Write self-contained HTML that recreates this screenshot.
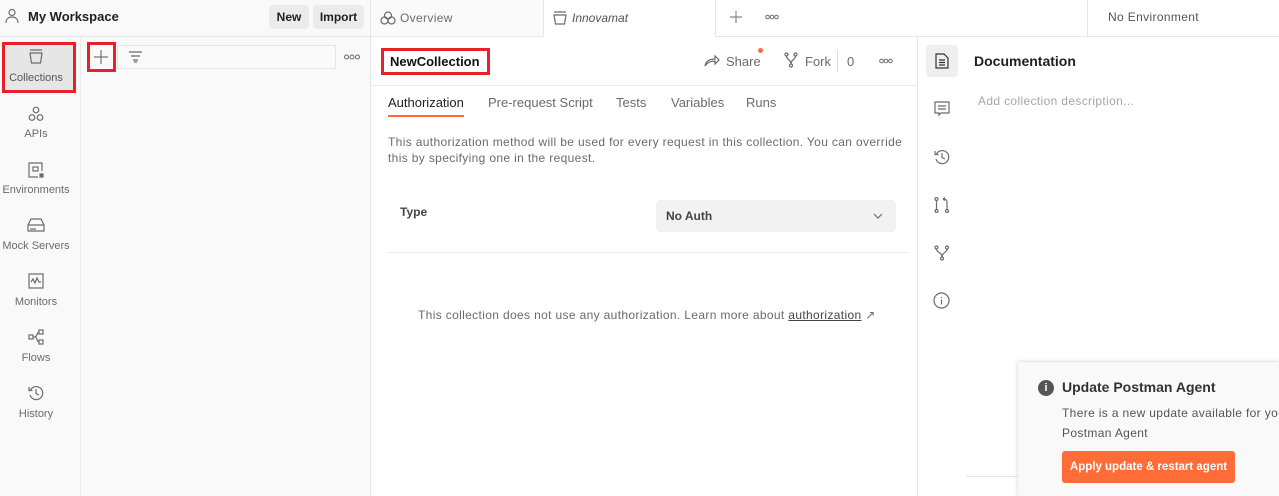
<!DOCTYPE html>
<html><head><style>
*{margin:0;padding:0;box-sizing:border-box}
body{width:1279px;height:496px;overflow:hidden;font-family:"Liberation Sans",sans-serif;font-size:12px;color:#212121;background:#fff;position:relative}
.a{position:absolute}
svg{position:absolute;fill:none;stroke:#6b6b6b;stroke-width:1.2}
.nav{position:absolute;left:0;width:72px;text-align:center;font-size:11px;color:#6b6b6b}
.ls{letter-spacing:.35px}
</style></head><body>
<!-- left panel -->
<div class="a" style="left:0;top:0;width:371px;height:496px;background:#f9f9f9;border-right:1px solid #e6e6e6"></div>
<div class="a" style="left:0;top:36px;width:371px;height:1px;background:#e6e6e6"></div>
<div class="a" style="left:80px;top:37px;width:1px;height:459px;background:#ebebeb"></div>
<svg style="left:5px;top:8px" width="14" height="16" viewBox="0 0 14 16"><circle cx="7" cy="4.5" r="3"/><path d="M1 15c0-4 2.5-6 6-6s6 2 6 6"/></svg>
<div class="a" style="left:28px;top:9px;font-size:13px;font-weight:bold;color:#212121">My Workspace</div>
<div class="a" style="left:269px;top:5px;width:40px;height:24px;background:#ebebeb;border-radius:4px;font-weight:bold;font-size:12px;text-align:center;line-height:24px">New</div>
<div class="a" style="left:313px;top:5px;width:51px;height:24px;background:#ebebeb;border-radius:4px;font-weight:bold;font-size:12px;text-align:center;line-height:24px">Import</div>
<!-- collections active -->
<div class="a" style="left:2px;top:42px;width:74px;height:51px;background:#e6e6e6;border:3px solid #e8202a"></div>
<svg style="left:28px;top:49px" width="16" height="15" viewBox="0 0 16 15"><path d="M2 1h12M2 4h12l-1.5 10h-9z"/></svg>
<div class="nav" style="left:0;top:72px;width:72px;color:#555">Collections</div>
<svg style="left:28px;top:106px" width="16" height="16" viewBox="0 0 16 16"><circle cx="8" cy="4" r="2.8"/><circle cx="4" cy="11.5" r="2.8"/><circle cx="12" cy="11.5" r="2.8"/></svg>
<div class="nav" style="top:128px">APIs</div>
<svg style="left:28px;top:162px" width="16" height="16" viewBox="0 0 16 16"><path d="M14 9V1H1v14h9"/><rect x="5" y="5" width="5" height="4"/><rect x="12" y="12" width="3" height="3" fill="#6b6b6b"/></svg>
<div class="nav" style="top:184px">Environments</div>
<svg style="left:27px;top:218px" width="18" height="14" viewBox="0 0 18 14"><path d="M1 7l3-6h10l3 6v6H1zM1 7h16M4 10v2M6 10v2M8 10v2"/></svg>
<div class="nav" style="top:240px">Mock Servers</div>
<svg style="left:28px;top:273px" width="16" height="16" viewBox="0 0 16 16"><rect x="1" y="1" width="14" height="14"/><path d="M3 9l2-3 2 4 2-5 2 4h2"/></svg>
<div class="nav" style="top:296px">Monitors</div>
<svg style="left:28px;top:329px" width="16" height="16" viewBox="0 0 16 16"><rect x="1" y="6" width="4" height="4"/><rect x="11" y="1" width="4" height="4"/><rect x="11" y="11" width="4" height="4"/><path d="M5 8h2c2 0 2-5 4-5M7 8c2 0 2 5 4 5"/></svg>
<div class="nav" style="top:352px">Flows</div>
<svg style="left:28px;top:385px" width="16" height="16" viewBox="0 0 16 16"><path d="M2.5 5A6.5 6.5 0 1 1 2 10M1 2v3.5h3.5M8 4v4.5l3 1.5"/></svg>
<div class="nav" style="top:408px">History</div>
<!-- toolbar -->
<div class="a" style="left:87px;top:42px;width:29px;height:30px;border:3px solid #e8202a"></div>
<svg style="left:94px;top:50px" width="14" height="14" viewBox="0 0 14 14"><path d="M7 0v14M0 7h14" stroke="#777"/></svg>
<div class="a" style="left:117px;top:45px;width:219px;height:24px;border:1px solid #e6e6e6;background:#fafafa"></div>
<svg style="left:128px;top:51px" width="15" height="12" viewBox="0 0 15 12"><path d="M1 1h13M3 5h9M5 9h5M6 11h3"/></svg>
<svg style="left:344px;top:54px;stroke-width:1" width="16" height="6" viewBox="0 0 16 6"><circle cx="2.5" cy="3" r="2"/><circle cx="8" cy="3" r="2"/><circle cx="13.5" cy="3" r="2"/></svg>
<!-- tabs -->
<div class="a" style="left:371px;top:0;width:908px;height:37px;border-bottom:1px solid #e6e6e6;background:#fafafa"></div>
<div class="a" style="left:543px;top:0;width:173px;height:37px;background:#fff;border-left:1px solid #e6e6e6;border-right:1px solid #e6e6e6"></div>
<div class="a" style="left:716px;top:0;width:371px;height:36px;background:#fff"></div>
<div class="a" style="left:1087px;top:0;width:192px;height:36px;background:#fff;border-left:1px solid #e6e6e6"></div>
<svg style="left:380px;top:11px" width="16" height="14" viewBox="0 0 16 14"><circle cx="8" cy="4.5" r="3.5"/><circle cx="4.5" cy="9.5" r="3.5"/><circle cx="11.5" cy="9.5" r="3.5"/></svg>
<div class="a ls" style="left:400px;top:11px;color:#6b6b6b">Overview</div>
<svg style="left:553px;top:11px" width="14" height="14" viewBox="0 0 14 14"><path d="M1 1h12M1 4h12l-1.5 9h-9z"/></svg>
<div class="a" style="left:572px;top:11px;color:#555;font-style:italic">Innovamat</div>
<svg style="left:730px;top:11px" width="12" height="12" viewBox="0 0 12 12"><path d="M6 0v12M0 6h12" stroke="#888"/></svg>
<svg style="left:765px;top:14px;stroke-width:1" width="14" height="6" viewBox="0 0 14 6"><circle cx="2.5" cy="3" r="1.8"/><circle cx="7" cy="3" r="1.8"/><circle cx="11.5" cy="3" r="1.8"/></svg>
<div class="a ls" style="left:1108px;top:10px;color:#555">No Environment</div>
<!-- main header -->
<div class="a" style="left:371px;top:85px;width:546px;height:1px;background:#ebebeb"></div>
<div class="a" style="left:381px;top:48px;width:109px;height:27px;border:3px solid #e8202a"></div>
<div class="a" style="left:390px;top:54px;font-size:13px;font-weight:bold;color:#111">NewCollection</div>
<svg style="left:704px;top:53px" width="16" height="14" viewBox="0 0 16 14"><path d="M1 13c1-5 5-7 10-7V3l4 4-4 4V8c-4 0-7 1-10 5z"/></svg>
<div class="a" style="left:726px;top:54px;font-size:13px;color:#6b6b6b">Share</div>
<div class="a" style="left:758px;top:48px;width:5px;height:5px;border-radius:50%;background:#ff6c37"></div>
<svg style="left:784px;top:52px" width="14" height="16" viewBox="0 0 14 16"><circle cx="2.5" cy="2.5" r="1.5"/><circle cx="11.5" cy="2.5" r="1.5"/><circle cx="7" cy="13.5" r="1.5"/><path d="M2.5 4c0 4 4.5 3 4.5 8M11.5 4c0 4-4.5 3-4.5 8"/></svg>
<div class="a" style="left:805px;top:54px;font-size:13px;color:#6b6b6b">Fork</div>
<div class="a" style="left:837px;top:50px;width:1px;height:22px;background:#ddd"></div>
<div class="a" style="left:847px;top:54px;font-size:13px;color:#6b6b6b">0</div>
<svg style="left:879px;top:58px;stroke-width:1" width="14" height="6" viewBox="0 0 14 6"><circle cx="2.5" cy="3" r="1.8"/><circle cx="7" cy="3" r="1.8"/><circle cx="11.5" cy="3" r="1.8"/></svg>
<!-- subtabs -->
<div class="a" style="left:388px;top:95px;font-size:13px;color:#212121">Authorization</div>
<div class="a" style="left:388px;top:115px;width:76px;height:2px;background:#ff6c37"></div>
<div class="a" style="left:488px;top:95px;font-size:13px;color:#6b6b6b">Pre-request Script</div>
<div class="a" style="left:616px;top:95px;font-size:13px;color:#6b6b6b">Tests</div>
<div class="a" style="left:671px;top:95px;font-size:13px;color:#6b6b6b">Variables</div>
<div class="a" style="left:746px;top:95px;font-size:13px;color:#6b6b6b">Runs</div>
<div class="a ls" style="left:388px;top:134px;width:525px;font-size:12px;line-height:16px;color:#6b6b6b">This authorization method will be used for every request in this collection. You can override<br>this by specifying one in the request.</div>
<div class="a" style="left:400px;top:205px;font-weight:bold;color:#444">Type</div>
<div class="a" style="left:656px;top:200px;width:240px;height:32px;background:#f2f2f2;border-radius:4px"></div>
<div class="a" style="left:666px;top:209px;font-weight:bold;color:#444">No Auth</div>
<svg style="left:873px;top:213px" width="10" height="6" viewBox="0 0 10 6"><path d="M1 1l4 4 4-4"/></svg>
<div class="a" style="left:388px;top:252px;width:520px;height:1px;background:#ebebeb"></div>
<div class="a ls" style="left:418px;top:308px;color:#6b6b6b;white-space:nowrap">This collection does not use any authorization. Learn more about <span style="text-decoration:underline;color:#444">authorization</span> ↗</div>
<!-- right panel -->
<div class="a" style="left:917px;top:37px;width:1px;height:459px;background:#e6e6e6"></div>
<div class="a" style="left:926px;top:45px;width:32px;height:32px;background:#efefef;border-radius:4px"></div>
<svg style="left:935px;top:53px" width="14" height="16" viewBox="0 0 14 16"><path d="M1 1h8l4 4v10H1zM4 7h6M4 9.5h6M4 12h6" stroke="#333"/></svg>
<div class="a" style="left:974px;top:53px;font-size:14px;font-weight:bold;color:#212121">Documentation</div>
<div class="a ls" style="left:978px;top:94px;color:#a6a6a6">Add collection description...</div>
<svg style="left:934px;top:101px" width="16" height="16" viewBox="0 0 16 16"><path d="M1 1h14v11H7l-2 2v-2H1zM4 5h8M4 8h8"/></svg>
<svg style="left:934px;top:149px" width="16" height="16" viewBox="0 0 16 16"><path d="M2.5 5A6.5 6.5 0 1 1 2 10M1 2v3.5h3.5M8 4v4.5l3 1.5"/></svg>
<svg style="left:934px;top:197px" width="16" height="16" viewBox="0 0 16 16"><circle cx="2.5" cy="2" r="1.5"/><circle cx="2.5" cy="14" r="1.5"/><circle cx="13" cy="14" r="1.5"/><path d="M2.5 3.5v9M13 12.5V5c0-2-2-3-4-3M9 2l2-1.5M9 2l2 1.5"/></svg>
<svg style="left:934px;top:245px" width="16" height="16" viewBox="0 0 16 16"><circle cx="2.5" cy="2.5" r="1.5"/><circle cx="13" cy="2.5" r="1.5"/><circle cx="8" cy="13.5" r="1.5"/><path d="M2.5 4c0 4 5.5 3 5.5 8M13 4c0 4-5 3-5 8"/></svg>
<svg style="left:933px;top:292px" width="17" height="17" viewBox="0 0 17 17"><circle cx="8.5" cy="8.5" r="7.5"/><path d="M8.5 7.5v5M8.5 5v1"/></svg>
<div class="a" style="left:966px;top:476px;width:60px;height:1px;background:#e6e6e6"></div>
<!-- toast -->
<div class="a" style="left:1018px;top:362px;width:261px;height:134px;background:#f9f9f9;box-shadow:0 0 4px rgba(0,0,0,.2)"></div>
<div class="a" style="left:1038px;top:380px;width:16px;height:16px;border-radius:50%;background:#555;color:#fff;font-size:11px;font-weight:bold;text-align:center;line-height:16px">i</div>
<div class="a" style="left:1062px;top:379px;font-size:14px;font-weight:bold;color:#333">Update Postman Agent</div>
<div class="a ls" style="left:1062px;top:403px;width:230px;white-space:nowrap;line-height:20px;color:#555;font-size:12px">There is a new update available for you<br>Postman Agent</div>
<div class="a" style="left:1062px;top:451px;width:173px;height:32px;background:#ff6c37;border-radius:3px;color:#fff;font-weight:bold;font-size:11.5px;text-align:center;line-height:32px">Apply update &amp; restart agent</div>
</body></html>
